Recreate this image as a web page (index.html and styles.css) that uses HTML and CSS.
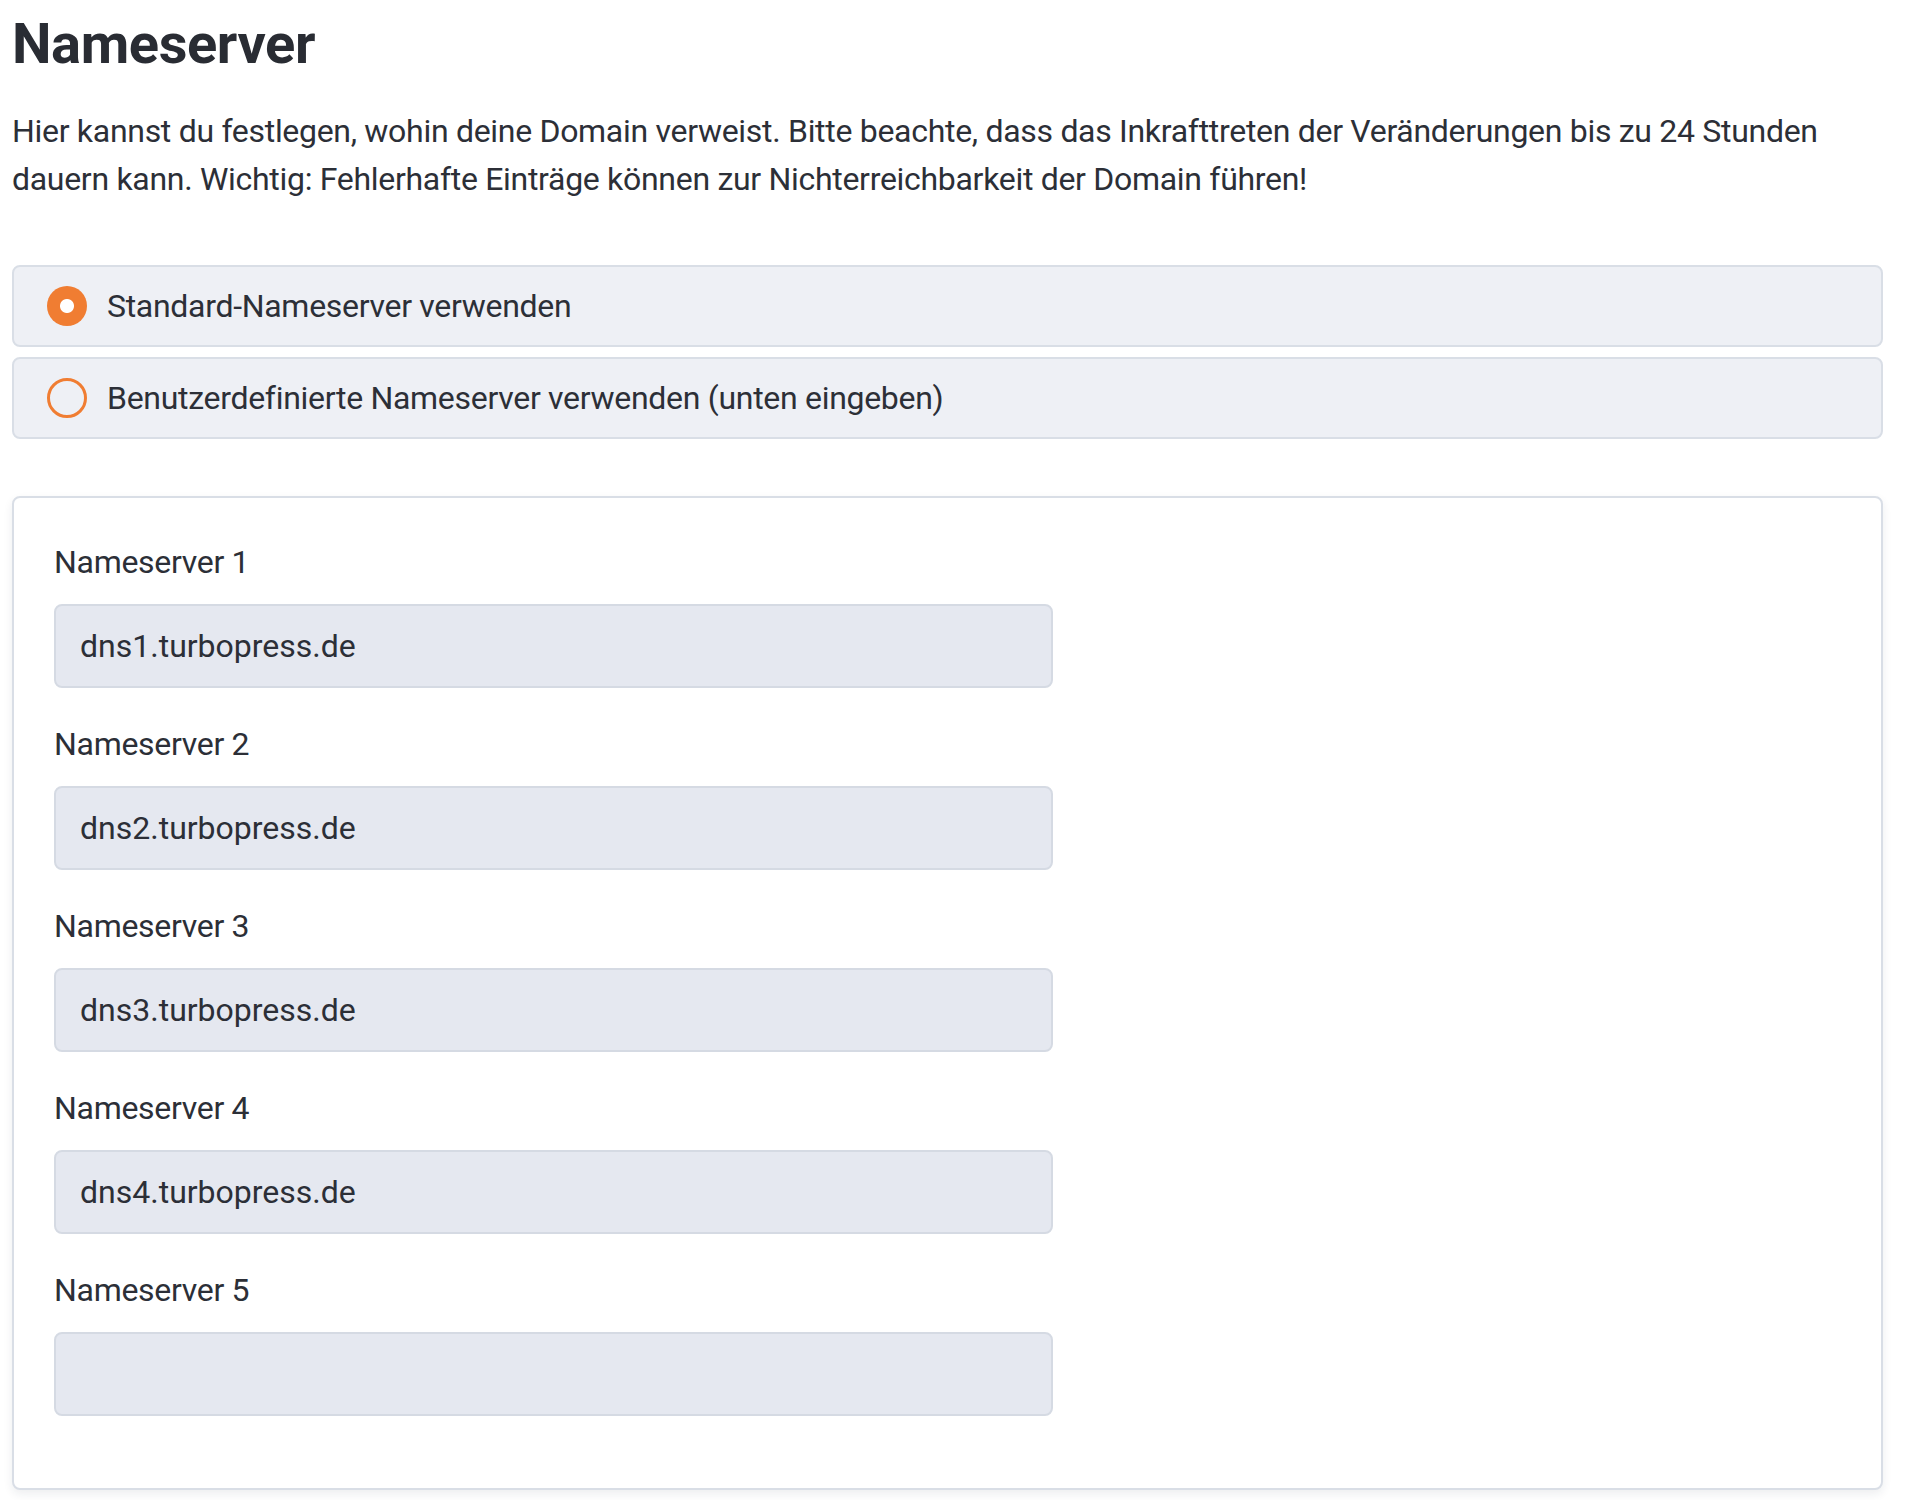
FILE: index.html
```html
<!DOCTYPE html>
<html lang="de">
<head>
    <meta charset="UTF-8">
    <meta name="viewport" content="width=device-width, initial-scale=1.0">
    <title>Nameserver</title>
    <link rel="stylesheet" href="styles.css">
</head>
<body>
    <div class="page">
        <h1>Nameserver</h1>
        <p class="intro">Hier kannst du festlegen, wohin deine Domain verweist. Bitte beachte, dass das Inkrafttreten der Veränderungen bis zu 24 Stunden dauern kann. Wichtig: Fehlerhafte Einträge können zur Nichterreichbarkeit der Domain führen!</p>

        <div class="choice-list">
            <label class="choice">
                <input type="radio" name="ns-mode" value="default" checked>
                <span class="radio-mark"></span>
                <span>Standard-Nameserver verwenden</span>
            </label>
            <label class="choice">
                <input type="radio" name="ns-mode" value="custom">
                <span class="radio-mark"></span>
                <span>Benutzerdefinierte Nameserver verwenden (unten eingeben)</span>
            </label>
        </div>

        <div class="card">
            <div class="form-group">
                <label for="ns1">Nameserver 1</label>
                <input type="text" id="ns1" value="dns1.turbopress.de">
            </div>
            <div class="form-group">
                <label for="ns2">Nameserver 2</label>
                <input type="text" id="ns2" value="dns2.turbopress.de">
            </div>
            <div class="form-group">
                <label for="ns3">Nameserver 3</label>
                <input type="text" id="ns3" value="dns3.turbopress.de">
            </div>
            <div class="form-group">
                <label for="ns4">Nameserver 4</label>
                <input type="text" id="ns4" value="dns4.turbopress.de">
            </div>
            <div class="form-group">
                <label for="ns5">Nameserver 5</label>
                <input type="text" id="ns5" value="">
            </div>
        </div>
    </div>
</body>
</html>
```

FILE: styles.css
```css
body {
    margin: 0;
    font-family: Roboto, "Liberation Sans", Arial, sans-serif;
    font-size: 32px;
    line-height: 48px;
    letter-spacing: -0.3px;
    color: #2c2f37;
    background: #fff;
}
.page {
    width: 1871px;
    margin-left: 12px;
    padding-bottom: 10px;
}
h1 {
    margin: 11px 0 0;
    font-size: 56px;
    line-height: 67px;
    font-weight: 700;
    letter-spacing: -0.4px;
    color: #292c33;
}
.intro {
    margin: 29px 0 62px;
}
.choice-list {
    display: flex;
    flex-direction: column;
    gap: 10px;
}
.choice {
    display: flex;
    align-items: center;
    padding: 15px 33px;
    background-color: #eef0f5;
    border: 2px solid #d9dee6;
    border-radius: 8px;
    cursor: pointer;
}
.choice input {
    display: none;
}
.radio-mark {
    width: 40px;
    height: 40px;
    box-sizing: border-box;
    border: 3px solid #f07d32;
    border-radius: 50%;
    margin-right: 20px;
    flex-shrink: 0;
}
.choice input:checked + .radio-mark {
    background-color: #f07d32;
    border-width: 0;
    background-image: radial-gradient(circle, #fff 6.5px, transparent 7.5px);
}
.card {
    margin-top: 57px;
    padding: 40px;
    border: 2px solid #d9dee6;
    border-radius: 8px;
    background: #fff;
    box-shadow: 0 4px 10px rgba(30, 40, 60, 0.08);
}
.form-group {
    margin-bottom: 32px;
}
.form-group label {
    display: block;
    margin-bottom: 18px;
}
.form-group input {
    display: block;
    width: 999px;
    box-sizing: border-box;
    padding: 16px 24px;
    font-family: inherit;
    font-size: 32px;
    line-height: 48px;
    letter-spacing: 0;
    color: #2c2f37;
    background-color: #e5e8f0;
    border: 2px solid #d5dae3;
    border-radius: 8px;
    outline: none;
}
```
